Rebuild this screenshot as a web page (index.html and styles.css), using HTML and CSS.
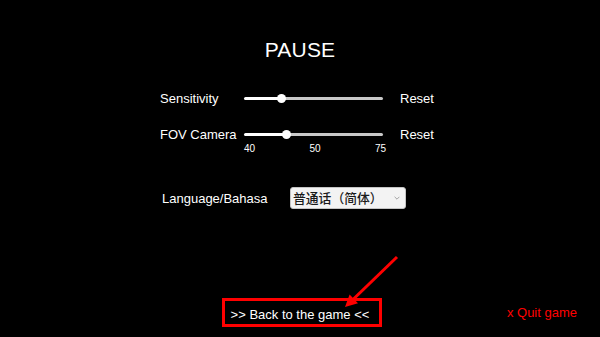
FILE: index.html
```html
<!DOCTYPE html>
<html>
<head>
<meta charset="utf-8">
<link rel="stylesheet" href="styles.css">
</head>
<body>
<div class="page">
  <h1 class="title">PAUSE</h1>

  <div class="sliders">
    <span class="label">Sensitivity</span>
    <div class="slider"><span class="fill" style="width:37px"></span><span class="knob"></span><span class="rest"></span></div>
    <span class="reset">Reset</span>

    <span class="label">FOV Camera</span>
    <div class="slider"><span class="fill" style="width:42px"></span><span class="knob"></span><span class="rest"></span></div>
    <span class="reset">Reset</span>
  </div>
  <div class="ticks"><span>40</span><span>50</span><span>75</span></div>

  <div class="lang-row">
    <span class="lang-label">Language/Bahasa</span>
    <div class="select">
      <span class="select-text">普通话（简体）</span>
      <svg class="chev" width="6" height="4" viewBox="0 0 6 4"><path d="M0.6 0.8 L3 3.2 L5.4 0.8" fill="none" stroke="#9a9a9a" stroke-width="0.9"/></svg>
    </div>
  </div>

  <div class="bottom">
    <span></span>
    <div class="back">&gt;&gt; Back to the game &lt;&lt;</div>
    <span class="quit">x Quit game</span>
  </div>

  <svg class="arrow" width="600" height="337" viewBox="0 0 600 337">
    <line x1="397" y1="257" x2="353" y2="299.5" stroke="#ff0000" stroke-width="3"/>
    <polygon points="345,307 358,303.2 349.6,294.4" fill="#ff0000"/>
  </svg>
</div>
</body>
</html>
```

FILE: styles.css
```css
* { box-sizing: border-box; }
html, body { margin: 0; padding: 0; background: #000; }
body {
  font-family: "Liberation Sans", Arial, sans-serif;
  color: #fff;
}
.page {
  position: relative;
  width: 600px;
  height: 337px;
  overflow: hidden;
  padding-top: 39px;
}
.title {
  margin: 0;
  font-size: 21px;
  line-height: 21px;
  font-weight: normal;
  text-align: center;
  letter-spacing: 0.2px;
}
.sliders {
  margin-top: 31px;
  padding-left: 160px;
  display: grid;
  grid-template-columns: 84px 139px auto;
  grid-auto-rows: 16px;
  row-gap: 20px;
  align-items: center;
  font-size: 13px;
  line-height: 16px;
}
.label { white-space: nowrap; }
.reset { margin-left: 17px; }
.slider {
  display: flex;
  align-items: center;
  height: 16px;
  padding-bottom: 2px;
}
.fill {
  height: 3px;
  background: #fff;
  border-radius: 2px 0 0 2px;
}
.knob {
  position: relative;
  z-index: 1;
  width: 9px;
  height: 9px;
  margin: 0 -4.5px;
  border-radius: 50%;
  background: #fff;
}
.rest {
  flex: 1;
  height: 3px;
  background: #c8c8c8;
  border-radius: 0 2px 2px 0;
}
.ticks {
  margin: 1px 0 0 244px;
  width: 142px;
  display: flex;
  justify-content: space-between;
  font-size: 10px;
  line-height: 10px;
}
.lang-row {
  margin-top: 33px;
  padding-left: 162px;
  display: flex;
  align-items: center;
  height: 22px;
  font-size: 13px;
}
.lang-label { width: 128px; }
.select {
  width: 116px;
  height: 22px;
  display: flex;
  align-items: center;
  justify-content: space-between;
  padding: 0 5px 0 2px;
  background: #f3f3f3;
  border: 1px solid #c4c4c4;
  border-radius: 3px;
  color: #1a1a1a;
}
.select-text {
  font-family: "Noto Sans CJK SC", sans-serif;
  font-size: 12.8px;
  font-weight: 500;
  line-height: 20px;
}
.chev { display: block; }
.bottom {
  margin-top: 89px;
  display: grid;
  grid-template-columns: 1fr auto 1fr;
  align-items: start;
  font-size: 13px;
}
.back {
  margin-left: 4px;
  border: 3px solid #ff0000;
  padding: 5px 10px 1px 6px;
  line-height: 17px;
  height: 29px;
  white-space: nowrap;
}
.quit {
  justify-self: end;
  margin: 7px 23px 0 0;
  line-height: 16px;
  color: #ff0000;
}
.arrow {
  position: absolute;
  left: 0;
  top: 0;
  pointer-events: none;
}
```
